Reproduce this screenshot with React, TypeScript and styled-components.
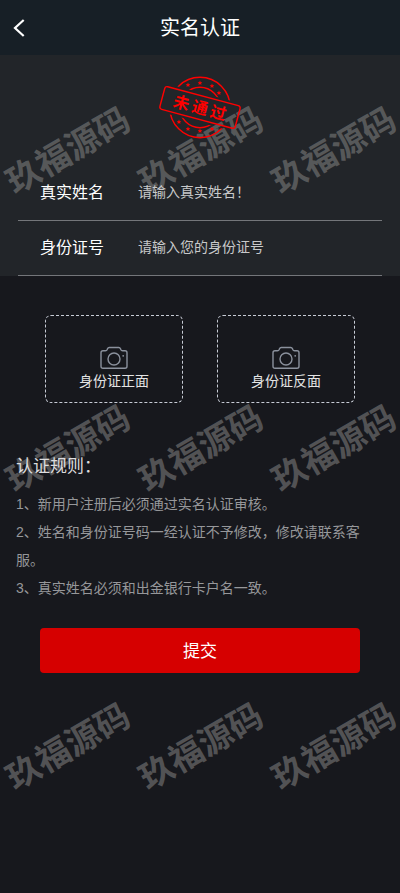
import React from "react";
import styled, { createGlobalStyle } from "styled-components";

const GlobalStyle = createGlobalStyle`
  * { box-sizing: border-box; }
  body {
    margin: 0;
    background: #17181d;
    color: #fff;
    font-family: "Liberation Sans", "Noto Sans CJK SC", sans-serif;
  }
`;

const Page = styled.div`
  position: relative;
  min-height: 100vh;
  overflow: hidden;
`;

const Header = styled.header`
  display: grid;
  grid-template-columns: 40px 1fr 40px;
  align-items: center;
  height: 55px;
  background: #171f26;
`;

const BackButton = styled.button`
  display: flex;
  align-items: center;
  height: 55px;
  padding: 0 0 0 13px;
  border: 0;
  background: none;
  color: #fff;
  cursor: pointer;
`;

const Title = styled.h1`
  margin: 0;
  font-size: 20px;
  line-height: 28px;
  font-weight: 400;
  text-align: center;
`;

const Panel = styled.section`
  padding: 21px 18px 0;
  background: #222529;
`;

const Stamp = styled.svg`
  position: relative;
  z-index: 2;
  display: block;
  width: 86px;
  height: 64px;
  margin: 0 auto 26px;
`;

const StampText = styled.text`
  font-family: "Noto Sans CJK SC", sans-serif;
  font-size: 16px;
  font-weight: 700;
  text-anchor: middle;
`;

const Field = styled.div`
  position: relative;
  z-index: 2;
  display: grid;
  grid-template-columns: 98px 1fr;
  align-items: center;
  height: 55px;
  padding-left: 22px;
  border-bottom: 1px solid #74767a;
`;

const FieldLabel = styled.label`
  font-size: 16px;
  line-height: 24px;
`;

const FieldInput = styled.input`
  width: 100%;
  height: 40px;
  padding: 0 0 2px;
  border: 0;
  outline: 0;
  background: none;
  color: #fff;
  font: inherit;
  font-size: 14px;

  &::placeholder {
    color: #c8c9ca;
    opacity: 1;
  }
`;

const Uploads = styled.section`
  position: relative;
  z-index: 2;
  display: grid;
  grid-template-columns: 1fr 1fr;
  gap: 34px;
  padding: 39px 45px 0;
`;

const UploadCard = styled.label`
  display: flex;
  flex-direction: column;
  align-items: center;
  height: 88px;
  padding-top: 30px;
  border: 1px dashed #c8ccd6;
  border-radius: 6px;
  color: #e4e4e4;
  font-size: 14px;
  line-height: 22px;
  cursor: pointer;
`;

const FileInput = styled.input`
  position: absolute;
  width: 1px;
  height: 1px;
  opacity: 0;
`;

const Rules = styled.section`
  position: relative;
  z-index: 2;
  padding: 51px 24px 0 16px;
`;

const RulesTitle = styled.h2`
  margin: 0 0 10px;
  color: #dcdcde;
  font-size: 17px;
  line-height: 26px;
  font-weight: 400;
`;

const Rule = styled.p`
  margin: 0;
  color: #96979a;
  font-size: 14px;
  line-height: 28px;
  text-spacing-trim: space-all;
`;

const Actions = styled.div`
  position: relative;
  z-index: 2;
  padding: 26px 40px;
`;

const SubmitButton = styled.button`
  display: block;
  width: 100%;
  height: 45px;
  padding: 0 0 2px;
  border: 0;
  border-radius: 4px;
  background: #d60000;
  color: #fff;
  font: inherit;
  font-size: 17px;
  cursor: pointer;
`;

const Watermark = styled.div`
  position: absolute;
  inset: 0;
  z-index: 1;
  display: grid;
  grid-template-columns: repeat(3, minmax(0, 1fr));
  grid-auto-rows: 298px;
  overflow: hidden;
  pointer-events: none;
`;

const Mark = styled.span`
  place-self: center;
  color: rgba(128, 128, 128, 0.56);
  font-family: "Noto Sans CJK SC", sans-serif;
  font-size: 34px;
  line-height: 34px;
  font-weight: 700;
  white-space: nowrap;
  transform: rotate(-30deg);
`;

const STARS = [
  [32, 20], [44, 18], [56, 21], [63, 28],
  [23, 57], [32, 64], [44, 66], [56, 64],
];

function RejectedStamp() {
  return (
    <Stamp viewBox="1 11 86 64" role="img" aria-label="未通过">
      <defs>
        <mask id="band" maskUnits="userSpaceOnUse" x="0" y="0" width="90" height="90">
          <rect width="90" height="90" fill="#fff" />
          <rect x="-50" y="-14.5" width="100" height="29" fill="#000" transform="translate(44 42.5) rotate(15)" />
        </mask>
        <path id="star" fill="#f00" d="M0-2.4.7-.8 2.3-.7 1.1.4 1.5 2 0 1.1-1.5 2-1.1.4-2.3-.7-.7-.8Z" />
      </defs>
      <g fill="none" stroke="#f00" strokeWidth="1.4" mask="url(#band)">
        <circle cx="44" cy="42.5" r="30.2" />
        <circle cx="44" cy="42.5" r="20.2" />
      </g>
      {STARS.map(([x, y]) => (
        <use key={`${x}-${y}`} href="#star" x={x} y={y} />
      ))}
      <g transform="translate(44 42.5) rotate(15)">
        <rect x="-39" y="-11.7" width="78" height="23.4" rx="2.5" fill="none" stroke="#f00" strokeWidth="1.4" />
        <StampText x="-19 0 19" y="6" fill="#f00">未通过</StampText>
      </g>
    </Stamp>
  );
}

function CameraIcon() {
  return (
    <svg width="28" height="24" viewBox="0 0 28 24" fill="none" stroke="#8b919d" strokeWidth="1.4" strokeLinejoin="round" aria-hidden="true">
      <path d="M3 4.8H5.4Q6.8 4.8 7.2 3.6L7.5 2.7Q8 1.5 9.3 1.5H18.7Q20 1.5 20.5 2.7L20.8 3.6Q21.2 4.8 22.6 4.8H25Q27 4.8 27 6.8V20.3Q27 22.3 25 22.3H3Q1 22.3 1 20.3V6.8Q1 4.8 3 4.8Z" />
      <circle cx="14" cy="13" r="6" />
      <circle cx="23.2" cy="9.8" r=".9" fill="#8b919d" stroke="none" />
    </svg>
  );
}

const RULES = [
  "1、新用户注册后必须通过实名认证审核。",
  "2、姓名和身份证号码一经认证不予修改，修改请联系客服。",
  "3、真实姓名必须和出金银行卡户名一致。",
];

export default function App() {
  return (
    <Page>
      <GlobalStyle />
      <Header>
        <BackButton type="button" aria-label="返回">
          <svg width="12" height="18" viewBox="0 0 12 18" fill="none" stroke="currentColor" strokeWidth="2.2" aria-hidden="true">
            <path d="M10.7 1 2 9l8.7 8" />
          </svg>
        </BackButton>
        <Title>实名认证</Title>
      </Header>
      <Panel>
        <RejectedStamp />
        <Field>
          <FieldLabel htmlFor="name">真实姓名</FieldLabel>
          <FieldInput id="name" placeholder="请输入真实姓名！" />
        </Field>
        <Field>
          <FieldLabel htmlFor="idno">身份证号</FieldLabel>
          <FieldInput id="idno" placeholder="请输入您的身份证号" />
        </Field>
      </Panel>
      <Uploads>
        {["身份证正面", "身份证反面"].map((side) => (
          <UploadCard key={side}>
            <CameraIcon />
            {side}
            <FileInput type="file" accept="image/*" />
          </UploadCard>
        ))}
      </Uploads>
      <Rules>
        <RulesTitle>认证规则：</RulesTitle>
        {RULES.map((rule) => (
          <Rule key={rule}>{rule}</Rule>
        ))}
      </Rules>
      <Actions>
        <SubmitButton type="button">提交</SubmitButton>
      </Actions>
      <Watermark aria-hidden="true">
        {Array.from({ length: 9 }, (_, i) => (
          <Mark key={i}>玖福源码</Mark>
        ))}
      </Watermark>
    </Page>
  );
}
